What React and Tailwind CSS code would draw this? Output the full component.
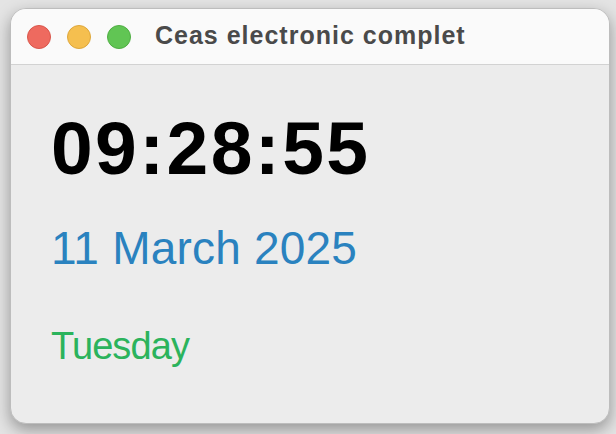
export default function App() {
  const font = { fontFamily: '"Liberation Sans", Arial, sans-serif' };
  return (
    <div className="w-[616px] h-[434px] bg-[#e4e4e4] pl-[10px] pt-[8px] overflow-hidden" style={font}>
      <div className="w-[600px] h-[416px] rounded-[16px] overflow-hidden border border-[#bdbdbd] shadow-[0_6px_16px_rgba(0,0,0,0.35)] flex flex-col bg-[#ececec]">
        <div className="h-[56px] shrink-0 bg-[#fafafa] border-b border-[#d2d2d2] flex items-center pl-[16px]">
          <div className="flex items-center gap-[16px]">
            <span className="w-[24px] h-[24px] rounded-full bg-[#ee6a5f] border border-[#d9564b]" />
            <span className="w-[24px] h-[24px] rounded-full bg-[#f5bf4f] border border-[#dea73b]" />
            <span className="w-[24px] h-[24px] rounded-full bg-[#61c554] border border-[#4fae43]" />
          </div>
          <div className="ml-[24px] text-[25px] leading-none font-bold text-[#4a4a4a] tracking-[1px] pb-[2px]">
            Ceas electronic complet
          </div>
        </div>
        <div className="flex flex-col pl-[40px] pt-[46px]">
          <div className="text-[75px] leading-[75px] font-bold text-black tracking-[2.4px]">09:28:55</div>
          <div className="mt-[39px] text-[46px] leading-[46px] text-[#2a82bf] tracking-[0.2px]">11 March 2025</div>
          <div className="mt-[56px] text-[38px] leading-[38px] text-[#2bb35c] tracking-[-0.9px]">Tuesday</div>
        </div>
      </div>
    </div>
  );
}
